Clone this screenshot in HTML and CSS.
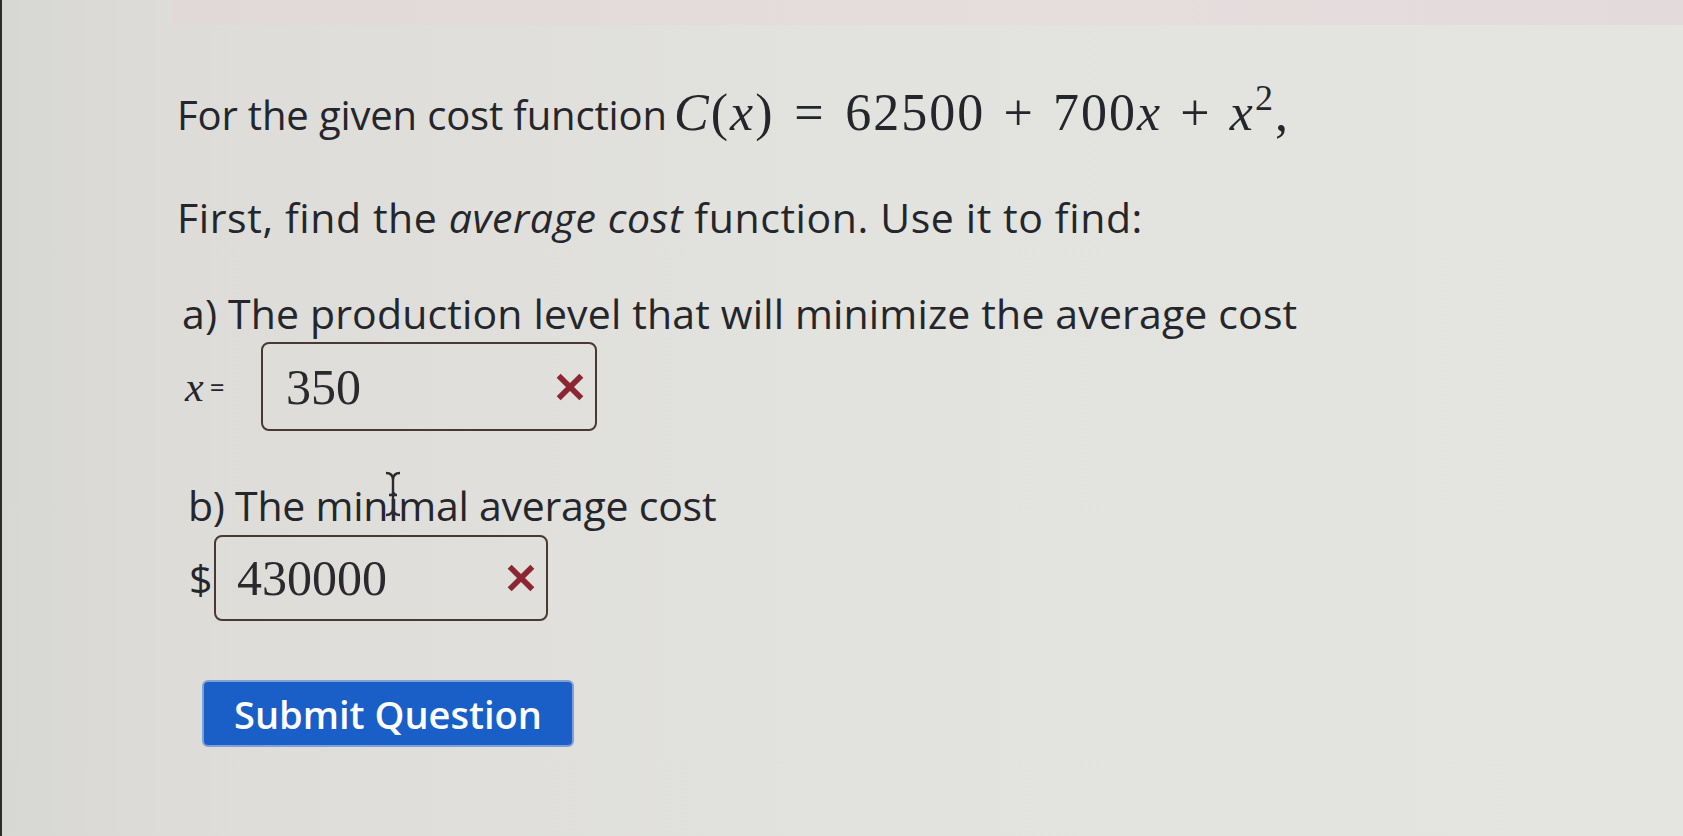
FILE: index.html
```html
<!DOCTYPE html>
<html lang="en">
<head>
<meta charset="utf-8">
<title>Average cost question</title>
<link rel="stylesheet" href="styles.css">
</head>
<body>
<div class="screen">
  <div class="top-band"></div>
  <div class="question">
    <p class="line line-1">For the given cost function <span class="math"><i>C</i>(<i>x</i>)<span class="rel">=</span>62500<span class="bin">+</span>700<i>x</i><span class="bin">+</span><i>x</i><sup>2</sup>,</span></p>
    <p class="line line-2">First, find the <em>average cost</em> function. Use it to find:</p>
    <p class="line line-3">a) The production level that will minimize the average cost</p>
    <div class="answer-row row-a">
      <span class="label-x"><i class="mx">x</i><span class="eq">=</span></span>
      <div class="answer-box box-a">
        <span class="value">350</span>
        <svg class="wrong" viewBox="0 0 24 24" aria-hidden="true"><path d="M4 4 L20 20 M20 4 L4 20"/></svg>
      </div>
    </div>
    <p class="line line-b">b) The min<span class="cursor-host">i<svg class="ibeam" viewBox="0 0 20 46" aria-hidden="true"><path d="M3 2 Q10 2 10 9 L10 37 Q10 44 3 44 M17 2 Q10 2 10 9 M10 37 Q10 44 17 44 M6 24 L14 24"/></svg></span>mal average cost</p>
    <div class="answer-row row-b">
      <span class="label-dollar">$</span>
      <div class="answer-box box-b">
        <span class="value">430000</span>
        <svg class="wrong" viewBox="0 0 24 24" aria-hidden="true"><path d="M4 4 L20 20 M20 4 L4 20"/></svg>
      </div>
    </div>
    <button class="submit" type="button">Submit Question</button>
  </div>
</div>
</body>
</html>
```
FILE: styles.css
```css
html, body {
  margin: 0;
  padding: 0;
}
body {
  width: 1683px;
  height: 836px;
  overflow: hidden;
  background: #e0e0dc;
  font-family: "Open Sans", "Noto Sans", sans-serif;
  color: #25262b;
}
.screen {
  width: 1683px;
  height: 836px;
  background: linear-gradient(90deg, #d7d7d3 0%, #dddcd8 10%, #e2e2de 50%, #e4e4e0 100%);
  border-left: 2px solid #2c2c2c;
  box-sizing: border-box;
}
.top-band {
  height: 25px;
  margin-left: 170px;
  background: linear-gradient(90deg, #e0d9d8, #e6dedd 60%, #e3dbdb);
}
.question {
  padding-left: 175px;
}
.line {
  margin: 0;
  font-size: 41px;
  line-height: 48px;
  white-space: nowrap;
}
.line-1 {
  margin-top: 64px;
  font-size: 40px;
  letter-spacing: -0.15px;
}
.line-2 {
  margin-top: 54px;
  letter-spacing: 0.6px;
}
.line-3 {
  margin-top: 48px;
  padding-left: 5px;
  letter-spacing: 0.15px;
}
.math {
  font-family: "Liberation Serif", "DejaVu Serif", serif;
  font-size: 52px;
  letter-spacing: 2px;
  margin-left: -3px;
}
.math i {
  font-style: italic;
}
.rel {
  margin: 0 0.38em;
}
.bin {
  margin: 0 0.35em;
}
.math sup {
  font-size: 36px;
  vertical-align: 20px;
  line-height: 0;
}
em {
  font-style: italic;
}
.answer-row {
  display: flex;
  align-items: center;
  margin-top: 5px;
}
.label-x {
  display: flex;
  align-items: center;
  width: 84px;
  padding-left: 8px;
  box-sizing: border-box;
}
.mx {
  font-family: "Liberation Serif", serif;
  font-size: 42px;
  font-style: italic;
}
.eq {
  font-family: "Open Sans", sans-serif;
  font-size: 26px;
  margin-left: 6px;
}
.answer-box {
  display: flex;
  align-items: center;
  justify-content: space-between;
  box-sizing: border-box;
  border: 2px solid #4a3835;
  border-radius: 8px;
  padding: 0 8px 0 23px;
}
.box-a {
  width: 336px;
  height: 89px;
}
.box-b {
  width: 334px;
  height: 86px;
  padding-left: 21px;
}
.value {
  font-family: "Liberation Serif", "DejaVu Serif", serif;
  font-size: 50px;
  color: #2a2a2e;
}
.wrong {
  width: 34px;
  height: 34px;
  fill: none;
  stroke: #8c2633;
  stroke-width: 4;
  stroke-linecap: butt;
}
.line-b {
  margin-top: 50px;
  padding-left: 11px;
  letter-spacing: -0.25px;
}
.cursor-host {
  position: relative;
}
.ibeam {
  position: absolute;
  left: -6px;
  top: -6px;
  width: 22px;
  height: 46px;
  fill: none;
  stroke: #2b2b2f;
  stroke-width: 2.4;
}
.row-b {
  margin-top: 6px;
}
.label-dollar {
  width: 37px;
  padding-left: 12px;
  box-sizing: border-box;
  font-size: 41px;
}
.submit {
  display: block;
  margin-top: 59px;
  margin-left: 25px;
  width: 372px;
  height: 67px;
  border: 2px solid #7fa0d6;
  border-radius: 6px;
  background: #1a5ec8;
  color: #ffffff;
  font-family: "Open Sans", sans-serif;
  font-weight: 600;
  font-size: 38px;
  padding: 0;
}
```
